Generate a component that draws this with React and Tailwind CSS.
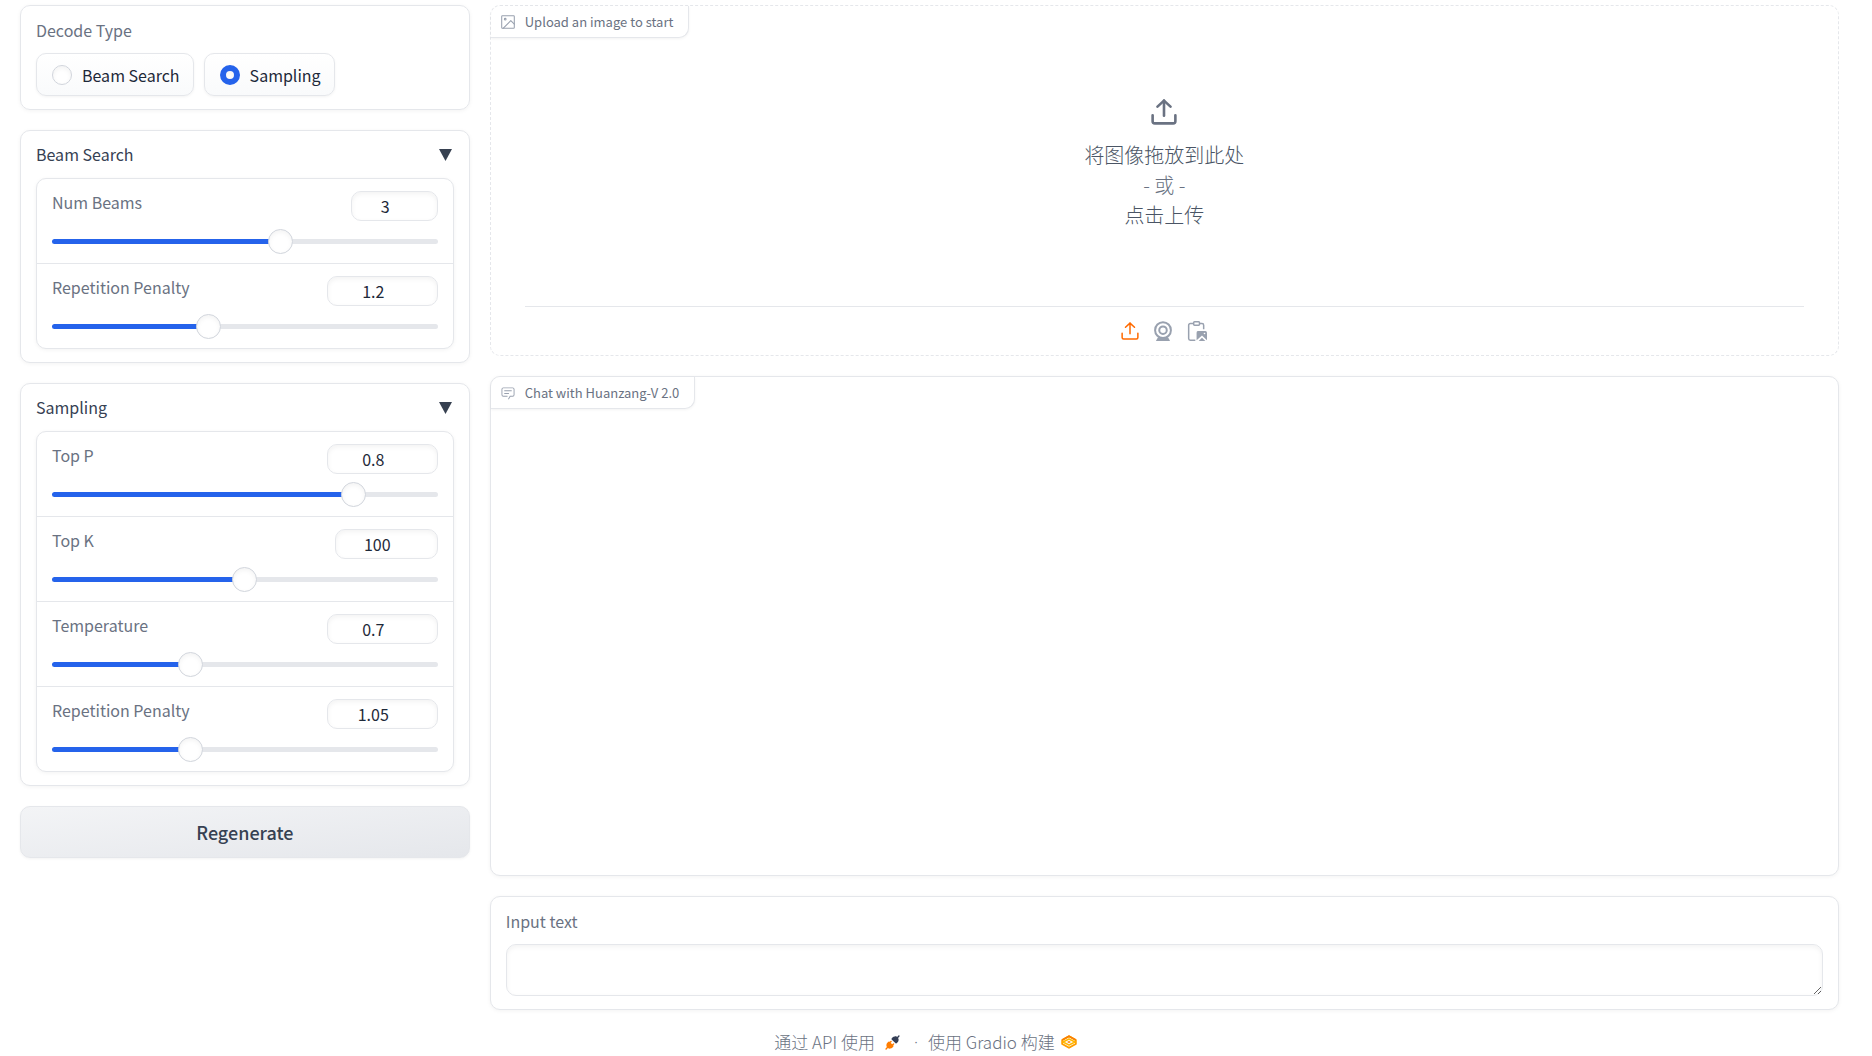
import { useState } from 'react';

const card = 'rounded-[10px] border border-gray-200 bg-white shadow-[0_1px_4px_0_rgb(0_0_0/0.05)]';
const inset = 'shadow-[inset_0_2px_5px_0_rgb(0_0_0/0.05)]';

function SliderRow({ id, label, initial, min = 0, max, step, inputWidth }) {
  const [value, setValue] = useState(initial);
  const percent = ((value - min) / (max - min)) * 100;

  return (
    <div className="px-[15px] pt-3 pb-2">
      <div className="flex items-start justify-between">
        <label htmlFor={id} className="text-base leading-[22px] text-gray-500">{label}</label>
        <input
          type="number"
          aria-label={`${label} value`}
          value={value}
          min={min}
          max={max}
          step={step}
          onChange={(e) => setValue(e.target.value)}
          className={`${inputWidth} ${inset} h-[30px] rounded-[10px] border border-gray-200 bg-white pr-[18px] text-center text-base text-gray-800 outline-none [appearance:textfield] [&::-webkit-inner-spin-button]:appearance-none`}
        />
      </div>
      <input
        id={id}
        type="range"
        value={value}
        min={min}
        max={max}
        step={step}
        onChange={(e) => setValue(e.target.value)}
        style={{ backgroundImage: `linear-gradient(to right, #2563eb ${percent}%, #e5e7eb ${percent}%)` }}
        className="mt-[18px] mb-[11px] block h-[5px] w-full cursor-pointer appearance-none rounded-full [&::-webkit-slider-thumb]:size-[25px] [&::-webkit-slider-thumb]:appearance-none [&::-webkit-slider-thumb]:rounded-full [&::-webkit-slider-thumb]:border [&::-webkit-slider-thumb]:border-gray-300 [&::-webkit-slider-thumb]:bg-white [&::-webkit-slider-thumb]:shadow-[inset_0_2px_5px_0_rgb(0_0_0/0.05)]"
      />
    </div>
  );
}

function Accordion({ title, children }) {
  const [open, setOpen] = useState(true);

  return (
    <section className={`${card} px-[15px] pt-3 pb-[13px]`}>
      <button
        type="button"
        aria-expanded={open}
        onClick={() => setOpen(!open)}
        className="flex h-6 w-full items-start justify-between text-base leading-[22px] text-gray-700"
      >
        <span>{title}</span>
        <svg className={`mt-1.5 mr-0.5 h-3 w-[13px] ${open ? '' : 'rotate-90'}`} viewBox="0 0 13 12" fill="#374151">
          <path d="M0 0h13L6.5 12z" />
        </svg>
      </button>
      {open && (
        <div className={`${card} mt-[11px] divide-y divide-gray-200`}>{children}</div>
      )}
    </section>
  );
}

function RadioOption({ label, checked, onChange }) {
  return (
    <label className="flex h-[43px] cursor-pointer items-center gap-2.5 rounded-[10px] border border-gray-200 bg-linear-to-b from-white to-gray-50 pr-[13px] pl-[15px] text-base text-gray-800 shadow-[0_1px_3px_0_rgb(0_0_0/0.05)]">
      <input
        type="radio"
        name="decode"
        checked={checked}
        onChange={onChange}
        className={`${inset} size-5 appearance-none rounded-full border border-gray-300 bg-white checked:border-[6px] checked:border-[#2563eb]`}
      />
      {label}
    </label>
  );
}

function BlockLabel({ icon, children }) {
  return (
    <div className="flex h-8 w-fit items-center gap-2.5 rounded-tl-[10px] rounded-br-[10px] border-r border-b border-gray-200 bg-white pr-[15px] pl-2.5 text-[13px] text-gray-500 shadow-[0_1px_3px_0_rgb(0_0_0/0.05)]">
      {icon}
      <span>{children}</span>
    </div>
  );
}

const ImageIcon = () => (
  <svg className="size-[14px] text-gray-400" viewBox="2 2 20 20" fill="none" stroke="currentColor" strokeWidth="1.5" strokeLinecap="round" strokeLinejoin="round">
    <rect x="3" y="3" width="18" height="18" rx="1" />
    <circle cx="8" cy="8" r="1.2" />
    <polyline points="21 15 16 10 5 21" />
  </svg>
);

const ChatIcon = () => (
  <svg className="size-[14px] text-gray-400" viewBox="1 1 30 30" fill="currentColor">
    <path d="M17.74 30 16 29l4-7h6a2 2 0 0 0 2-2V8a2 2 0 0 0-2-2H6a2 2 0 0 0-2 2v12a2 2 0 0 0 2 2h9v2H6a4 4 0 0 1-4-4V8a4 4 0 0 1 4-4h20a4 4 0 0 1 4 4v12a4 4 0 0 1-4 4h-4.84Z" />
    <path d="M8 10h16v2H8zm0 6h10v2H8z" />
  </svg>
);

const UploadIcon = ({ className }) => (
  <svg className={className} viewBox="0 0 24 24" fill="none" stroke="currentColor" strokeLinecap="round" strokeLinejoin="round">
    <path d="M1.500 15v5.500a2 2 0 0 0 2 2h17a2 2 0 0 0 2-2V15" />
    <polyline points="18 7 12 1.500 6 7" />
    <path d="M12 1.500v14" />
  </svg>
);

const WebcamIcon = () => (
  <svg className="size-5" viewBox="0 0 24 24" fill="none" stroke="currentColor" strokeWidth="2.4">
    <circle cx="12" cy="11" r="9.500" />
    <circle cx="12" cy="11" r="4.500" />
    <path d="M6 19.500h12l2.500 4.500h-17z" fill="currentColor" stroke="none" />
  </svg>
);

const PasteIcon = () => (
  <svg className="size-5" viewBox="0 0 24 24" fill="none" stroke="currentColor" strokeWidth="1.800" strokeLinejoin="round">
    <path d="M8 3H4a2 2 0 0 0-2 2v16a2 2 0 0 0 2 2h6M15 3h3a2 2 0 0 1 2 2v5" />
    <rect x="8" y="1" width="7" height="4" rx="1" />
    <path d="M13 12h9a2 2 0 0 1 2 2v9l-6-5.500L11.500 23V14a2 2 0 0 1 1.500-2zM14 24l4-4 4 4z" fill="currentColor" stroke="none" />
    <circle cx="21" cy="15" r="1" fill="white" stroke="none" />
  </svg>
);

const RocketIcon = () => (
  <svg className="h-[15px] w-[15px]" viewBox="0 0 28 28">
    <path fill="#343f56" d="M26.940 2.940a1.330 1.330 0 0 0-1.880-1.880l-2.490 2.480c-1.450-.95-3.030-1.110-4.400-.9-1.620.25-3.060 1.030-3.780 1.750l-2 2a1.330 1.330 0 0 0 0 1.890l7.330 7.330c.52.52 1.370.52 1.890 0l2-2c.72-.72 1.500-2.160 1.750-3.780.2-1.370.05-2.950-.9-4.400z" />
    <path fill="#ff7c00" d="M12.280 12.940a1.330 1.330 0 0 0-1.890-1.880l-1.720 1.720-.39-.39a1.330 1.330 0 0 0-1.890 0l-2 2c-.72.72-1.500 2.160-1.750 3.780-.2 1.370-.05 2.950.9 4.400l-2.480 2.490a1.330 1.330 0 1 0 1.880 1.880l2.490-2.480c1.450.95 3.030 1.110 4.400.9 1.620-.25 3.060-1.030 3.780-1.750l2-2a1.330 1.330 0 0 0 0-1.890l-.39-.39 1.720-1.720a1.330 1.330 0 1 0-1.880-1.890l-1.730 1.730-2.780-2.780z" />
  </svg>
);

const GradioIcon = () => (
  <svg className="h-[14px] w-4" viewBox="0 0 32 28" fill="none" strokeLinejoin="round">
    <path d="M2.500 10 16 2.500 29.500 10v8L16 25.500 2.500 18z" stroke="#ff9d00" strokeWidth="4" />
    <path d="M2.500 10 16 2.500 29.500 10" stroke="#f98100" strokeWidth="4" />
    <path d="M4 14 16 8l12 6-12 6z" stroke="#ffb700" strokeWidth="3" />
    <path d="m12 14 4-2 4 2-4 2z" fill="#f97700" />
  </svg>
);

export default function App() {
  const [decodeType, setDecodeType] = useState('Sampling');

  return (
    <div className="bg-white pt-[5px] pr-[33px] pl-5 font-['Noto_Sans_CJK_SC',sans-serif]">
      <main className="flex items-start gap-5">
        <div className="flex min-w-0 flex-1 flex-col gap-5">
          <fieldset className={`${card} px-[15px] pt-[13px] pb-[13px]`}>
            <legend className="float-left mb-3 w-full text-base leading-[22px] text-gray-500">Decode Type</legend>
            <div className="clear-both flex flex-wrap gap-2.5">
              {['Beam Search', 'Sampling'].map((name) => (
                <RadioOption
                  key={name}
                  label={name}
                  checked={decodeType === name}
                  onChange={() => setDecodeType(name)}
                />
              ))}
            </div>
          </fieldset>

          <Accordion title="Beam Search">
            <SliderRow id="num-beams" label="Num Beams" initial={3} max={5} step={1} inputWidth="w-[87px]" />
            <SliderRow id="beam-penalty" label="Repetition Penalty" initial={1.2} max={3} step={0.01} inputWidth="w-[111px]" />
          </Accordion>

          <Accordion title="Sampling">
            <SliderRow id="top-p" label="Top P" initial={0.8} max={1} step={0.05} inputWidth="w-[111px]" />
            <SliderRow id="top-k" label="Top K" initial={100} max={200} step={1} inputWidth="w-[103px]" />
            <SliderRow id="temperature" label="Temperature" initial={0.7} max={2} step={0.05} inputWidth="w-[111px]" />
            <SliderRow id="sampling-penalty" label="Repetition Penalty" initial={1.05} max={3} step={0.01} inputWidth="w-[111px]" />
          </Accordion>

          <button
            type="button"
            className="h-[52px] rounded-[10px] border border-gray-200 bg-linear-to-br from-gray-100 to-gray-200 text-lg font-medium text-gray-700 shadow-[0_1px_3px_0_rgb(0_0_0/0.05)]"
          >
            Regenerate
          </button>
        </div>

        <div className="flex min-w-0 flex-3 flex-col gap-5">
          <section className="rounded-[10px] border border-dashed border-gray-200 bg-white">
            <BlockLabel icon={<ImageIcon />}>Upload an image to start</BlockLabel>
            <button type="button" className="flex w-full flex-col items-center pt-[61px] pb-[76px] text-xl leading-[30px] font-light text-gray-600">
              <UploadIcon className="mb-[15px] size-[26px] stroke-[2.4] text-gray-500" />
              <span>将图像拖放到此处</span>
              <span className="text-gray-500">- 或 -</span>
              <span>点击上传</span>
            </button>
            <div className="mx-[34px] flex h-[49px] items-center justify-center gap-[14px] border-t border-gray-200 text-gray-400">
              <button type="button" aria-label="Upload file" className="text-orange-500"><UploadIcon className="size-[18px] stroke-2" /></button>
              <button type="button" aria-label="Webcam"><WebcamIcon /></button>
              <button type="button" aria-label="Paste from clipboard"><PasteIcon /></button>
            </div>
          </section>

          <section className={`${card} h-[500px]`}>
            <BlockLabel icon={<ChatIcon />}>Chat with Huanzang-V 2.0</BlockLabel>
          </section>

          <div className={`${card} px-[15px] pt-3 pb-[13px]`}>
            <label htmlFor="prompt" className="block text-base leading-6 text-gray-500">Input text</label>
            <textarea id="prompt" rows="1" className={`${inset} mt-[11px] block h-[52px] w-full resize rounded-[10px] border border-gray-200 bg-white p-3 outline-none`} />
          </div>
        </div>
      </main>

      <footer className="mt-[19px] flex h-[26px] items-center justify-center pr-2 text-[17px] font-light text-gray-500">
        <a href="#api" className="flex items-center gap-2.5">通过 API 使用 <RocketIcon /></a>
        <span className="mr-2.5 ml-3.5 font-['Open_Sans',sans-serif]">·</span>
        <a href="#gradio" className="flex items-center gap-1.5">使用 Gradio 构建 <GradioIcon /></a>
      </footer>
    </div>
  );
}
